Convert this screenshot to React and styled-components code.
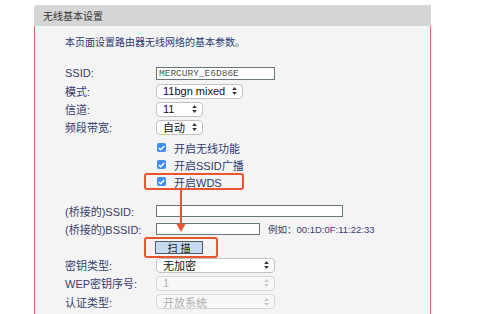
import { styled, createGlobalStyle } from 'styled-components'

const GlobalStyle = createGlobalStyle`
  body {
    margin: 0;
    background: #ffffff;
    font-family: "Liberation Sans", "Noto Sans CJK SC", sans-serif;
  }
`

const Page = styled.div`
  padding: 5px 0 0 34px;
`

const Panel = styled.section`
  width: 397px;
`

const PanelHeader = styled.div`
  height: 21px;
  background: #d6d6d6;
  border-top-left-radius: 3px;
  display: flex;
  align-items: center;
  padding-left: 9px;
  font-size: 10px;
  color: #333;
`

const PanelBody = styled.div`
  position: relative;
  background: #f4f4f4;
  border-left: 1px solid #e26d6d;
  border-right: 1px solid #e26d6d;
  padding: 10px 0 10px 30px;
  color: #35406f;
`

const Intro = styled.p`
  margin: 0 0 14px;
  height: 14px;
  line-height: 14px;
  font-size: 10px;
  color: #2d3a72;
`

const Row = styled.div`
  display: grid;
  grid-template-columns: 91px 1fr;
  align-items: center;
  height: ${p => p.$h || 18}px;
  margin-top: ${p => p.$gap || 0}px;
`

const Label = styled.span`
  font-size: 11px;
  white-space: nowrap;
`

const Field = styled.div`
  display: flex;
  align-items: center;
  gap: 8px;
`

const TextBox = styled.div`
  box-sizing: border-box;
  width: ${p => p.$w}px;
  height: ${p => p.$hh || 12}px;
  background: #fff;
  border: 1px solid #687878;
  font-family: "Liberation Mono", monospace;
  font-size: 9.5px;
  color: #555;
  line-height: 11px;
  padding-left: 2px;
`

const SelectBox = styled.div`
  box-sizing: border-box;
  position: relative;
  width: ${p => p.$w}px;
  height: ${p => p.$hh || 15}px;
  background: ${p => (p.$disabled ? '#f8f8f8' : '#fff')};
  border: 1px solid ${p => (p.$disabled ? '#d6d6d6' : '#c2c2c2')};
  border-radius: 4px;
  font-size: 11px;
  color: ${p => (p.$disabled ? '#b0b0b0' : '#111')};
  display: flex;
  align-items: center;
  padding-left: 6px;
`

const Updown = styled.svg`
  position: absolute;
  right: 5px;
  top: 50%;
  transform: translateY(-50%);
`

const Hint = styled.span`
  font-size: 9.5px;
  color: #35406f;
`

const CheckRow = styled.div`
  position: relative;
  display: flex;
  align-items: center;
  gap: 8px;
  font-size: 11px;
  color: #2d3a72;
`

const Tick = styled.span`
  width: 9px;
  height: 9px;
  border-radius: 2px;
  background: #3f8ef0;
  display: flex;
  align-items: center;
  justify-content: center;
  margin-left: 1px;
`

const Ring = styled.span`
  position: absolute;
  left: ${p => p.$l}px;
  top: 50%;
  margin-top: ${p => -p.$hh / 2}px;
  width: ${p => p.$w}px;
  height: ${p => p.$hh}px;
  border: 2px solid #e8552e;
  border-radius: 3px;
  box-sizing: border-box;
  pointer-events: none;
`

const ScanButton = styled.div`
  position: relative;
  box-sizing: border-box;
  width: 48px;
  height: 13px;
  margin-left: -1px;
  background: #c6daf1;
  border: 1px solid #4f5b66;
  font-size: 10px;
  color: #222;
  display: flex;
  align-items: center;
  justify-content: center;
  letter-spacing: 3px;
  padding-left: 3px;
`

const Arrow = styled.svg`
  position: absolute;
  left: 141px;
  top: 164px;
`

const Arrows = ({ color = '#333' }) => (
  <Updown width="5" height="9" viewBox="0 0 5 9">
    <path d="M2.5 0.5 L4.8 3.6 L0.2 3.6 Z" fill={color} />
    <path d="M2.5 8.5 L4.8 5.4 L0.2 5.4 Z" fill={color} />
  </Updown>
)

const Select = ({ w, value, disabled }) => (
  <SelectBox $w={w} $disabled={disabled}>
    {value}
    <Arrows color={disabled ? '#c4c4c4' : '#333'} />
  </SelectBox>
)

const Check = ({ children, ring }) => (
  <CheckRow>
    {ring && <Ring $l={-12} $w={100} $hh={17} />}
    <Tick>
      <svg width="7" height="6" viewBox="0 0 7 6">
        <polyline points="0.8,3 2.7,4.8 6.2,0.9" fill="none" stroke="#fff" strokeWidth="1.5" />
      </svg>
    </Tick>
    {children}
  </CheckRow>
)

const App = () => {
  return (
    <>
      <GlobalStyle />
      <Page>
        <Panel>
          <PanelHeader>无线基本设置</PanelHeader>
          <PanelBody>
            <Intro>本页面设置路由器无线网络的基本参数。</Intro>
            <Row>
              <Label>SSID:</Label>
              <Field><TextBox $w={119} $hh={13}>MERCURY_E6D86E</TextBox></Field>
            </Row>
            <Row>
              <Label>模式:</Label>
              <Field><Select w={87} value="11bgn mixed" /></Field>
            </Row>
            <Row>
              <Label>信道:</Label>
              <Field><Select w={47} value="11" /></Field>
            </Row>
            <Row>
              <Label>频段带宽:</Label>
              <Field><Select w={47} value="自动" /></Field>
            </Row>
            <Row $h={17} $gap={3}>
              <span />
              <Check>开启无线功能</Check>
            </Row>
            <Row $h={17}>
              <span />
              <Check>开启SSID广播</Check>
            </Row>
            <Row $h={17}>
              <span />
              <Check ring>开启WDS</Check>
            </Row>
            <Row $gap={12}>
              <Label>(桥接的)SSID:</Label>
              <Field><TextBox $w={187} /></Field>
            </Row>
            <Row>
              <Label>(桥接的)BSSID:</Label>
              <Field>
                <TextBox $w={104} />
                <Hint>例如：00:1D:0F:11:22:33</Hint>
              </Field>
            </Row>
            <Row>
              <span />
              <Field>
                <ScanButton>
                  <Ring $l={-12} $w={74} $hh={21} />
                  扫描
                </ScanButton>
              </Field>
            </Row>
            <Row>
              <Label>密钥类型:</Label>
              <Field><Select w={119} value="无加密" /></Field>
            </Row>
            <Row>
              <Label>WEP密钥序号:</Label>
              <Field><Select w={119} value="1" disabled /></Field>
            </Row>
            <Row $h={19}>
              <Label>认证类型:</Label>
              <Field><Select w={119} value="开放系统" disabled /></Field>
            </Row>
            <Arrow width="10" height="44" viewBox="0 0 10 44">
              <line x1="5" y1="0" x2="5" y2="36" stroke="#e8552e" strokeWidth="2" />
              <path d="M0.5 34 L9.5 34 L5 42 Z" fill="#e8552e" />
            </Arrow>
          </PanelBody>
        </Panel>
      </Page>
    </>
  )
}

export default App
